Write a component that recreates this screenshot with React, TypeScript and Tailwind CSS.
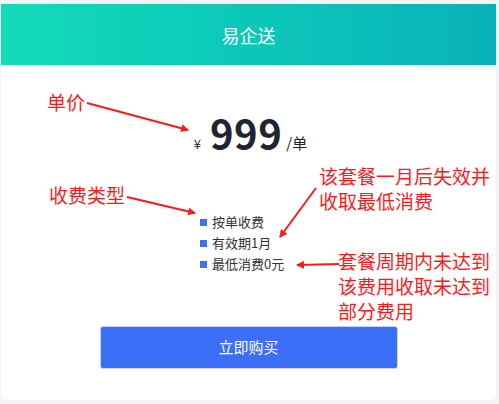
import React from "react";

const cjk = { fontFamily: '"Noto Sans CJK SC", "Noto Sans", sans-serif' };

export default function App() {
  return (
    <div className="relative w-[499px] h-[404px] bg-[#f4f4f6] pt-[4px] pl-[1px] overflow-hidden" style={cjk}>
      <div className="w-[495px] h-[396px] bg-white rounded-b-[5px] flex flex-col">
        <div className="h-[61px] bg-gradient-to-r from-[#13dcb9] to-[#09b2b9] flex items-center justify-center text-white text-[18px] pt-[2px]">
          易企送
        </div>
        <div className="flex flex-col items-center">
          <div className="mt-[47px] flex items-baseline h-[48px] ml-[4px]">
            <span className="text-[13px] text-[#222] mr-[9px]">¥</span>
            <span className="text-[40px] font-bold text-[#1f2533] leading-none tracking-[0.5px]">999</span>
            <span className="text-[15px] text-[#222] ml-[4px]">/单</span>
          </div>
          <div className="mt-[53px] self-start ml-[199px] flex flex-col gap-[3px]">
            {["按单收费", "有效期1月", "最低消费0元"].map((t) => (
              <div key={t} className="flex items-center h-[18px] text-[13px] text-[#333]">
                <span className="w-[7px] h-[7px] bg-[#3d6ff7] mr-[5px]" />
                {t}
              </div>
            ))}
          </div>
          <button className="mt-[53px] w-[298px] h-[43px] bg-[#3b6ff8] rounded-[3px] border border-[#c8d4f0] text-white text-[15px]">
            立即购买
          </button>
        </div>
      </div>

      {/* annotations */}
      <div className="absolute left-[47px] top-[89px] text-[19px] text-[#ff1a1a] leading-[25px]">单价</div>
      <div className="absolute left-[49px] top-[182px] text-[19px] text-[#ff1a1a] leading-[25px]">收费类型</div>
      <div className="absolute left-[319px] top-[163px] text-[19px] text-[#ff1a1a] leading-[25px]">
        该套餐一月后失效并
        <br />
        收取最低消费
      </div>
      <div className="absolute left-[338px] top-[248px] text-[19px] text-[#ff1a1a] leading-[25px]">
        套餐周期内未达到
        <br />
        该费用收取未达到
        <br />
        部分费用
      </div>
      <svg className="absolute left-0 top-0" width="499" height="404">
        <defs>
          <marker id="ah" markerWidth="8" markerHeight="8" refX="7" refY="4" orient="auto" markerUnits="userSpaceOnUse">
            <path d="M0,0 L8,4 L0,8 Z" fill="#ff1a1a" />
          </marker>
        </defs>
        <g stroke="#ff1a1a" strokeWidth="2" fill="none">
          <line x1="87" y1="103" x2="188" y2="130" markerEnd="url(#ah)" />
          <line x1="127" y1="197" x2="195" y2="213" markerEnd="url(#ah)" />
          <line x1="316" y1="188" x2="280" y2="237" markerEnd="url(#ah)" />
          <line x1="339" y1="264" x2="297" y2="265" markerEnd="url(#ah)" />
        </g>
      </svg>
    </div>
  );
}
